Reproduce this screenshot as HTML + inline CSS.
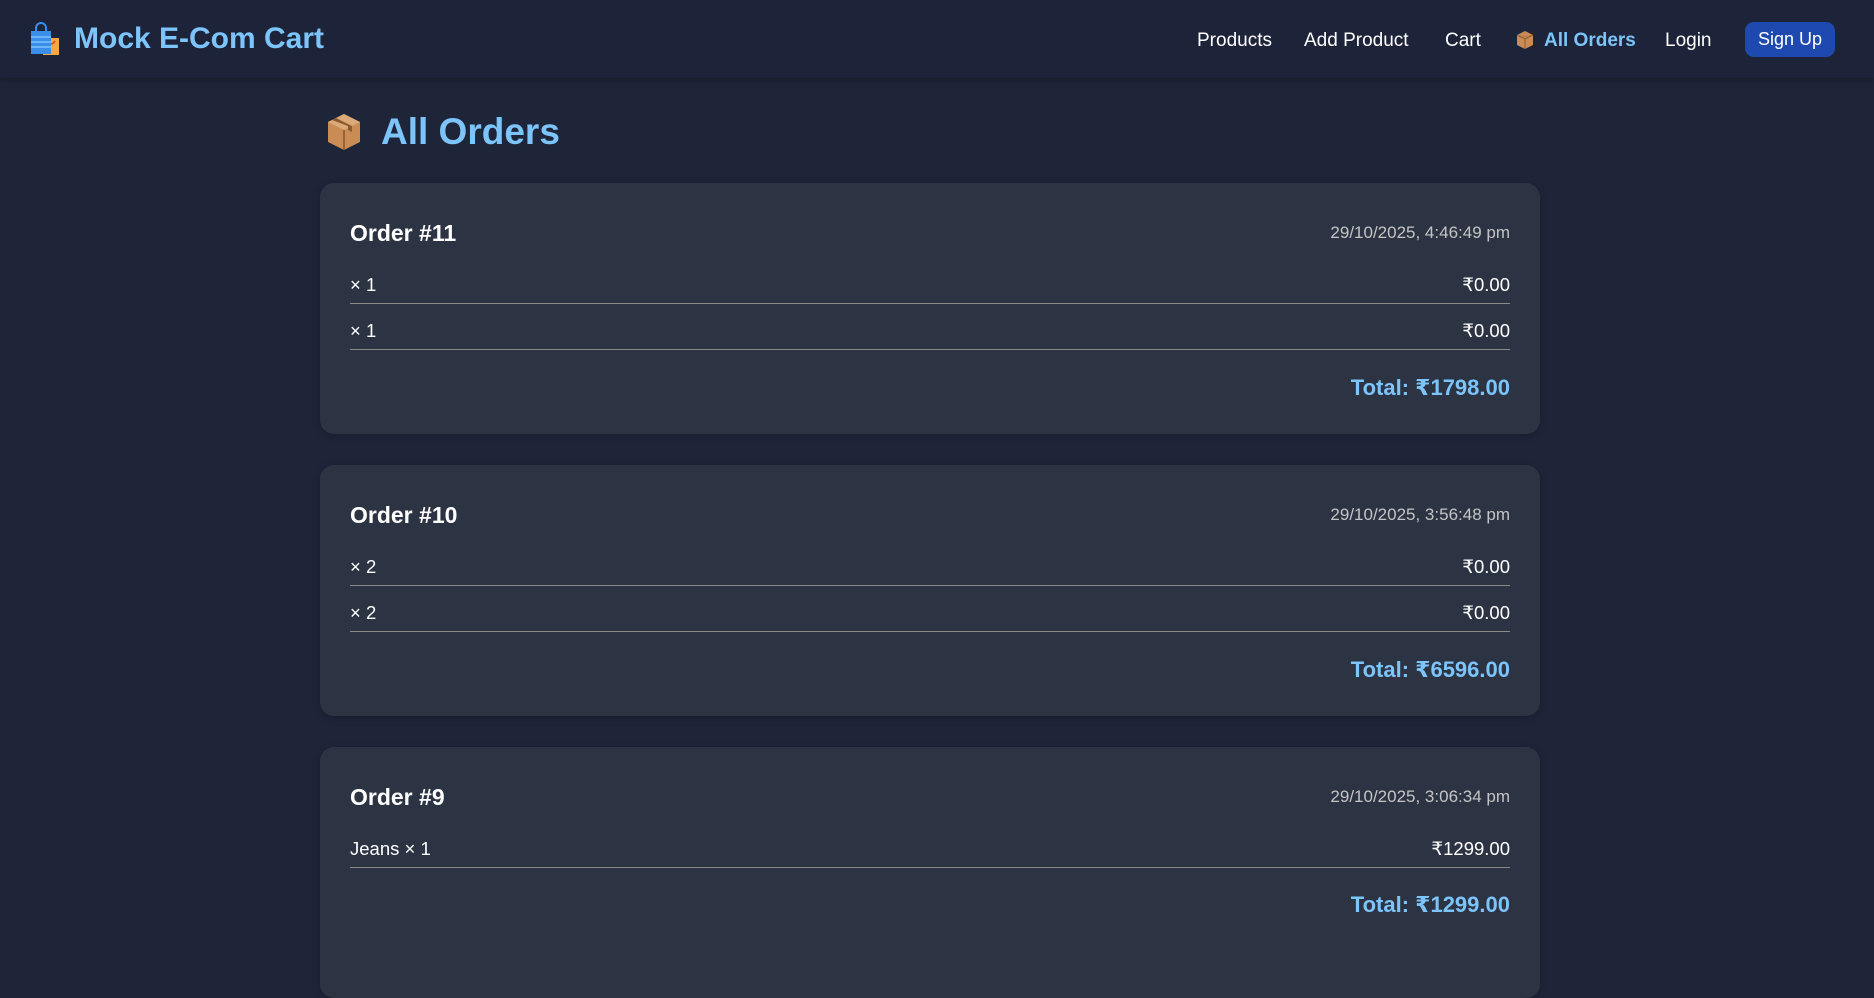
<!DOCTYPE html>
<html><head><meta charset="utf-8"><style>
*{margin:0;padding:0;box-sizing:border-box}
body{width:1874px;height:911px;overflow:hidden;background:#1e2539;font-family:"Liberation Sans","DejaVu Sans",sans-serif;color:#fff;position:relative}
.nav{position:absolute;left:0;top:0;width:1874px;height:78px;background:#1d2439;box-shadow:0 2px 6px rgba(0,0,0,.25)}
.logo{position:absolute;left:74px;top:22px;font-size:30px;font-weight:bold;color:#7cc4fa}
.nl{position:absolute;top:30px;font-size:19px;color:#fff}
.btn{position:absolute;left:1745px;top:22px;width:90px;height:35px;background:#1e4ab0;border-radius:9px;font-size:18px;text-align:center;line-height:35px}
.title{position:absolute;left:381px;top:111px;font-size:37px;font-weight:bold;color:#7cc4fa}
.card{position:absolute;left:320px;width:1220px;height:251px;background:#2c3444;border-radius:14px;box-shadow:0 2px 8px rgba(0,0,0,.2)}
.ot{position:absolute;left:30px;top:37px;font-size:23px;font-weight:bold}
.dt{position:absolute;right:30px;top:40px;font-size:17px;color:#c4c4c4}
.row{position:absolute;left:30px;right:30px;height:46px;border-bottom:1px solid #8a8a86;font-size:18.5px}
.row span{position:absolute;bottom:7px}
.row .r{right:0}
.tot{position:absolute;right:30px;top:192px;font-size:22px;font-weight:bold;color:#7cc4fa}
</style></head><body>
<div class="nav">
<svg style="position:absolute;left:29px;top:22px" width="32" height="34" viewBox="0 0 32 34"><path d="M7 10 V6 a5 5 0 0 1 10 0 V10" stroke="#3b8ee8" stroke-width="2" fill="none"/><rect x="14" y="16" width="16" height="17" fill="#f6a740"/><path d="M18 19 q4 6 8 0" stroke="#e0453b" stroke-width="1.6" fill="none"/><rect x="2" y="9" width="20" height="23" fill="#3b8ee8"/><path d="M2 15h20M2 20h20M2 25h20" stroke="#7cc0ff" stroke-width="1.5"/></svg>
<div class="logo">Mock E-Com Cart</div>
<div class="nl" style="left:1197px">Products</div>
<div class="nl" style="left:1304px">Add Product</div>
<div class="nl" style="left:1445px">Cart</div>
<svg style="position:absolute;left:1516px;top:30px" width="18" height="20" viewBox="0 0 18 20"><path d="M9 1 L17 5 L17 15 L9 19 L1 15 L1 5Z" fill="#c98c55"/><path d="M1 5 L9 9 L17 5 M9 9 V19" stroke="#8d5a30" stroke-width="1" fill="#b07440" fill-opacity=".3"/></svg>
<div class="nl" style="left:1544px;color:#7cc4fa;font-weight:bold">All Orders</div>
<div class="nl" style="left:1665px">Login</div>
<div class="btn">Sign Up</div>
</div>
<svg style="position:absolute;left:326px;top:112px" width="36" height="40" viewBox="0 0 18 20"><path d="M9 1 L17 5 L17 15 L9 19 L1 15 L1 5Z" fill="#c98c55"/><path d="M1 5 L9 9 L17 5 L9 1Z" fill="#dcaa78"/><path d="M9 9 V19" stroke="#8d5a30" stroke-width=".8"/><path d="M5 3 L13 7 V10 L11 9 V7 L3 4Z" fill="#8d5a30"/></svg>
<div class="title">All Orders</div>

<div class="card" style="top:183px">
<div class="ot">Order #11</div><div class="dt">29/10/2025, 4:46:49 pm</div>
<div class="row" style="top:75px"><span>× 1</span><span class="r">₹0.00</span></div>
<div class="row" style="top:121px"><span>× 1</span><span class="r">₹0.00</span></div>
<div class="tot">Total: ₹1798.00</div>
</div>
<div class="card" style="top:465px">
<div class="ot">Order #10</div><div class="dt">29/10/2025, 3:56:48 pm</div>
<div class="row" style="top:75px"><span>× 2</span><span class="r">₹0.00</span></div>
<div class="row" style="top:121px"><span>× 2</span><span class="r">₹0.00</span></div>
<div class="tot">Total: ₹6596.00</div>
</div>
<div class="card" style="top:747px">
<div class="ot">Order #9</div><div class="dt">29/10/2025, 3:06:34 pm</div>
<div class="row" style="top:75px"><span>Jeans × 1</span><span class="r">₹1299.00</span></div>
<div class="tot" style="top:145px">Total: ₹1299.00</div>
</div>
</body></html>
